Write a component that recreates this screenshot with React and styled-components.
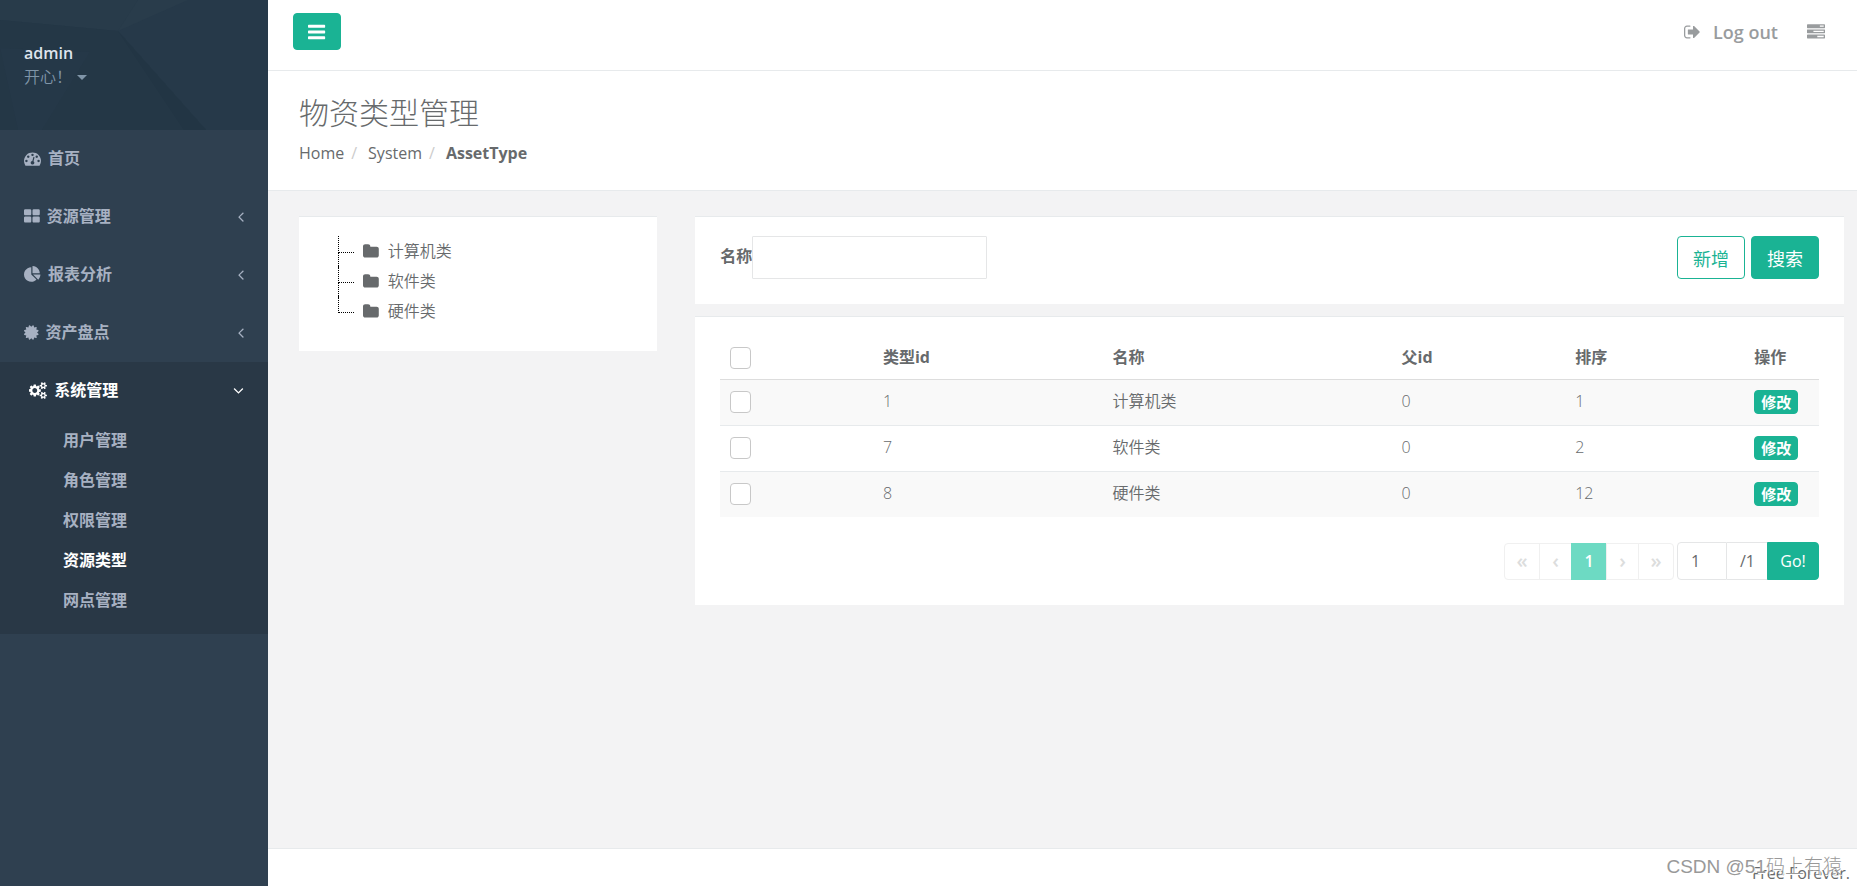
import React, {useState} from 'react'
import styled, {createGlobalStyle, css} from 'styled-components'

const sans = `"Open Sans", "Noto Sans CJK SC", sans-serif`;
const green = '#1ab394';

const GlobalStyle = createGlobalStyle`
    * {
        box-sizing: border-box;
    }

    body {
        margin: 0;
        background-color: #2f4050;
        color: #676a6c;
        font-family: ${sans};
        font-size: 16px;
        line-height: 24px;
    }

    button, input {
        font-family: inherit;
    }

    ul, ol {
        margin: 0;
        padding: 0;
        list-style: none;
    }

    a {
        color: inherit;
        text-decoration: none;
    }
`;

const gear = 'v140q0 16-149 31-12 27-30 52 51 113 51 138 0 4-4 7-122 71-124 71-8 0-46-47t-52-68q-20 2-30 2t-30-2q-14 21-52 68t-46 47q-2 0-124-71-4-3-4-7 0-25 51-138-18-25-30-52-149-15-149-31v-140q0-16 149-31 13-29 30-52-51-113-51-138 0-4 4-7 4-2 35-20t59-34 30-16q8 0 46 46.500t52 67.500q20-2 30-2t30 2q51-71 92-112l6-2q4 0 124 70 4 3 4 7 0 25-51 138 17 23 30 52 149 15 149 31z';
const bar = 'v128q0 26-19 45t-45 19h-1408q-26 0-45-19t-19-45v-128q0-26 19-45t45-19h1408q26 0 45 19t19 45z';
const task = 'v256q0 26-19 45t-45 19h-1664q-26 0-45-19t-19-45v-256q0-26 19-45t45-19h1664q26 0 45 19t19 45z';
const tile = 'v384q0 52-38 90t-90 38h-512q-52 0-90-38t-38-90v-384q0-52 38-90t90-38h512q52 0 90 38t38 90z';
const dot = 'q0-53-37.5-90.5t-90.5-37.5-90.5 37.5-37.5 90.5 37.5 90.5 90.5 37.5 90.5-37.5 37.5-90.5z';

// [x, width, path] of each glyph, on a 1792 high em
const icons = {
    bars: [128, 1536, `M1664 1344${bar}M1664 832${bar}M1664 320${bar}`],
    dashboard: [0, 1792, `M384 1152${dot}M576 704${dot}M1004 1185l101-382q6-26-7.5-48.5t-38.5-29.5-48 6.5-30 39.5l-101 382q-60 5-107 43.5t-63 98.5q-20 77 20 146t117 89 146-20 89-117q16-60-6-117t-72-91zM1664 1152${dot}M1024 512${dot}M1472 704${dot}M1792 1152q0 261-141 483-19 29-54 29h-1402q-35 0-54-29-141-221-141-483 0-182 71-348t191-286 286-191 348-71 348 71 286 191 191 286 71 348z`],
    thLarge: [64, 1664, `M832 1024${tile}M832 256${tile}M1728 1024${tile}M1728 256${tile}`],
    pie: [0, 1792, 'M768 890l546 546q-106 108-247.5 168t-298.5 60q-209 0-385.5-103t-279.5-279.5-103-385.5 103-385.5 279.500-279.500 385.500-103v762zm187 6h773q0 157-60 298.5t-168 247.5zm709-128h-768v-768q209 0 385.500 103t279.500 279.500 103 385.500z'],
    certificate: [128, 1536, 'M1504 896l138 135q30 28 20 70-12 41-52 51l-188 48 53 186q12 41-19 70-29 31-70 19l-186-53-48 188q-10 40-51 52-12 2-19 2-31 0-51-22l-135-138-135 138q-28 30-70 20-41-11-51-52l-48-188-186 53q-41 12-70-19-31-29-19-70l53-186-188-48q-40-10-52-51-10-42 20-70l138-135-138-135q-30-28-20-70 12-41 52-51l188-48-53-186q-12-41 19-70 29-31 70-19l186 53 48-188q10-41 51-51 41-12 70 19l135 139 135-139q29-30 70-19 41 10 51 51l48 188 186-53q41-12 70 19 31 29 19 70l-53 186 188 48q40 10 52 51 10 42-20 70z'],
    cogs: [-32, 1920, `M832 896q0-106-75-181t-181-75-181 75-75 181 75 181 181 75 181-75 75-181zM1600 1408q0-52-38-90t-90-38-90 38-38 90q0 53 37.5 90.5t90.5 37.5 90.5-37.5 37.5-90.5zM1600 384q0-52-38-90t-90-38-90 38-38 90q0 53 37.5 90.5t90.5 37.5 90.5-37.5 37.5-90.5zM1216 805v185q0 10-7 19.5t-16 10.5l-155 24q-11 35-32 76 34 48 90 115 7 11 7 20 0 12-7 19-23 30-82.5 89.5t-78.5 59.5q-11 0-21-7l-115-90q-37 19-77 31-11 108-23 155-7 24-30 24h-186q-11 0-20-7.5t-10-17.5l-23-153q-34-10-75-31l-118 89q-7 7-20 7-11 0-21-8-144-133-144-160 0-9 7-19 10-14 41-53t47-61q-23-44-35-82l-152-24q-10-1-17-9.5t-7-19.5v-185q0-10 7-19.5t16-10.5l155-24q11-35 32-76-34-48-90-115-7-11-7-20 0-12 7-20 22-30 82-89t79-59q11 0 21 7l115 90q34-18 77-32 11-108 23-154 7-24 30-24h186q11 0 20 7.5t10 17.5l23 153q34 10 75 31l118-89q8-7 20-7 11 0 21 8 144 133 144 160 0 8-7 19-12 16-42 54t-45 60q23 48 34 82l152 23q10 2 17 10.5t7 19.5zM1856 1338${gear}M1856 314${gear}`],
    folder: [64, 1664, 'M1728 608v704q0 92-66 158t-158 66h-1216q-92 0-158-66t-66-158v-960q0-92 66-158t158-66h320q92 0 158 66t66 158v32h672q92 0 158 66t66 158z'],
    signOut: [64, 1664, 'M704 1440q0 4 1 20t.5 26.5-3 23.5-10 19.5-20.5 6.5h-320q-119 0-203.5-84.5t-84.5-203.5v-704q0-119 84.5-203.5t203.500-84.500h320q13 0 22.500 9.500t9.500 22.500q0 4 1 20t.5 26.500-3 23.500-10 19.500-20.500 6.500h-320q-66 0-113 47t-47 113v704q0 66 47 113t113 47h312l11.500 1 11.500 3 8 5.500 7 9 2 13.500zm928-544q0 26-19 45l-544 544q-19 19-45 19t-45-19-19-45v-288h-448q-26 0-45-19t-19-45v-384q0-26 19-45t45-19h448v-288q0-26 19-45t45-19 45 19l544 544q19 19 19 45z'],
    tasks: [0, 1792, `M1024 1408h640v-128h-640v128zM640 896h1024v-128h-1024v128zM1280 384h384v-128h-384v128zM1792 1216${task}M1792 704${task}M1792 192${task}`],
    angleLeft: [600, 640, 'M1203 544q0 13-10 23l-393 393 393 393q10 10 10 23t-10 23l-50 50q-10 10-23 10t-23-10l-466-466q-10-10-10-23t10-23l466-466q10-10 23-10t23 10l50 50q10 10 10 23z'],
    angleDown: [320, 1120, 'M1395 736q0 13-10 23l-466 466q-10 10-23 10t-23-10l-466-466q-10-10-10-23t10-23l50-50q10-10 23-10t23 10l393 393 393-393q10-10 23-10t23 10l50 50q10 10 10 23z'],
};

const Svg = styled.svg`
    display: block;
    flex: none;
    height: ${({$size}) => $size}px;
    fill: currentColor;
    fill-rule: evenodd;
`;

const Icon = ({name, size = 17}) => {
    const [x, width, path] = icons[name];
    return (
        <Svg $size={size} viewBox={`${x} 0 ${width} 1792`} aria-hidden="true">
            <path d={path}/>
        </Svg>
    )
}

const Layout = styled.div`
    display: flex;
    min-height: 100vh;
    position: relative;
`;

const Sidebar = styled.nav`
    flex: none;
    width: 268px;
    background-color: #2f4050;
    color: #a7b1c2;
    font-weight: 600;
`;

const Profile = styled.div`
    position: relative;
    height: 130px;
    padding: 41px 24px 0;
    background-color: #263949;
`;

const Pattern = styled.svg`
    position: absolute;
    inset: 0;
    width: 100%;
    height: 100%;
`;

const ProfileLink = styled.a`
    position: relative;
    display: block;
    color: #dfe4ed;
`;

const Mood = styled.span`
    display: flex;
    align-items: center;
    gap: 5px;
    color: #8095a8;
    font-weight: 350;
`;

const Caret = styled.span`
    border: 5px solid transparent;
    border-top-color: currentColor;
    border-bottom: 0;
`;

const MenuLink = styled.a`
    display: flex;
    align-items: center;
    gap: 7px;
    height: 58px;
    padding: 0 24px 2px;
`;

const Arrow = styled.span`
    margin-left: auto;
`;

const MenuItem = styled.li`
    ${({$active}) => $active && css`
        background-color: #293846;

        > ${MenuLink} {
            padding-left: 29px;
            color: #fff;
        }
    `}
`;

const SubMenu = styled.ul`
    padding: 0 0 14px;
`;

const SubLink = styled.a`
    display: block;
    padding: 8px 24px 8px 63px;
    color: ${({$active}) => $active ? '#fff' : 'inherit'};
`;

const Page = styled.div`
    flex: 1;
    min-width: 0;
    display: flex;
    flex-direction: column;
    background-color: #f3f3f4;
`;

const TopBar = styled.header`
    display: flex;
    justify-content: space-between;
    align-items: flex-start;
    height: 71px;
    padding: 13px 32px 0 25px;
    background-color: #fff;
    border-bottom: 1px solid #e7eaec;
`;

const TopLinks = styled.div`
    display: flex;
    align-items: center;
    gap: 29px;
    height: 38px;
    color: #999c9e;
    font-size: 18px;
    font-weight: 600;
`;

const TopLink = styled.a`
    display: flex;
    align-items: center;
    gap: 12px;
`;

const Button = styled.button`
    display: flex;
    align-items: center;
    justify-content: center;
    height: 43px;
    padding: 0 15px;
    border: 1px solid ${green};
    border-radius: 4px;
    background-color: ${({$outline}) => $outline ? '#fff' : green};
    color: ${({$outline}) => $outline ? green : '#fff'};
    font-size: 18px;
    cursor: pointer;
`;

const MenuButton = styled(Button)`
    width: 48px;
    height: 37px;
`;

const SmallButton = styled(Button)`
    height: 24px;
    margin-top: 1px;
    padding: 0 6px;
    font-size: 15px;
    font-weight: 600;
`;

const Heading = styled.div`
    height: 120px;
    padding: 22px 31px 0;
    background-color: #fff;
    border-bottom: 1px solid #e7eaec;
`;

const Title = styled.h2`
    margin: 0 0 8px;
    font-size: 30px;
    font-weight: 300;
    line-height: 40px;
`;

const Breadcrumb = styled.ol`
    display: flex;

    li + li::before {
        content: "/";
        padding: 0 11px 0 7px;
        color: #ccc;
        font-weight: 400;
    }

    li:last-child {
        font-weight: 700;
    }
`;

const Content = styled.main`
    flex: 1;
    display: flex;
    align-items: flex-start;
    gap: 38px;
    padding: 25px 13px 25px 31px;
`;

const Side = styled.div`
    flex: none;
    width: calc(25% - 28px);
`;

const Main = styled.div`
    flex: 1;
    display: flex;
    flex-direction: column;
    gap: 12px;
`;

const Panel = styled.section`
    padding: 19px 25px 25px;
    background-color: #fff;
    border-top: 1px solid #e7eaec;
`;

const Tree = styled.ul`
    padding: 0 0 0 14px;
`;

const TreeItem = styled.li`
    display: flex;
    align-items: center;
    gap: 9px;
    height: 30px;
    font-weight: 350;
`;

const Branch = styled.span`
    width: 16px;
    height: 30px;

    &::before, &::after {
        content: "";
        display: block;
        height: 15px;
        border-left: 1px dotted #000;
    }

    &::before {
        height: 16px;
        border-bottom: 1px dotted #000;
    }

    ${TreeItem}:last-child &::after {
        border: 0;
    }
`;

const SearchForm = styled.form`
    display: flex;
    align-items: flex-start;
`;

const FieldLabel = styled.label`
    padding-top: 8px;
    font-weight: 700;
`;

const TextInput = styled.input`
    width: 235px;
    height: 43px;
    padding: 0 15px;
    border: 1px solid #e5e6e7;
    border-radius: 1px;
    background-color: #fff;
    color: inherit;
    font-size: 16px;
`;

const Actions = styled.div`
    display: flex;
    gap: 6px;
    margin-left: auto;
`;

const Table = styled.table`
    width: 100%;
    margin-bottom: 25px;
    border-collapse: collapse;
    table-layout: fixed;

    th, td {
        padding: 9px 10px;
        text-align: left;
        vertical-align: top;
    }

    th {
        height: 43px;
        border-bottom: 1px solid #ddd;
        font-weight: 700;
    }

    td {
        height: 46px;
        font-weight: 350;
        border-top: 1px solid #e7eaec;
    }

    tbody tr:nth-child(odd) {
        background-color: #f9f9f9;
    }
`;

const Check = styled.input`
    appearance: none;
    display: block;
    width: 21px;
    height: 22px;
    margin: 2px 0 0;
    border: 1px solid #c8c8c8;
    border-radius: 4px;
    background-color: #fff;

    &:checked {
        background-color: ${green};
    }
`;

const PagerRow = styled.div`
    display: flex;
    justify-content: flex-end;
    align-items: center;
    gap: 3px;
    height: 38px;
`;

const Pager = styled.div`
    display: flex;
`;

const PageButton = styled.button`
    width: ${({$wide}) => $wide ? 36 : 33}px;
    height: 37px;
    margin-left: -1px;
    padding: 0;
    border: 1px solid ${({$active}) => $active ? '#6ddac3' : '#f0f0f0'};
    background-color: ${({$active}) => $active ? '#6ddac3' : '#fff'};
    color: ${({$active}) => $active ? '#fff' : '#dcdddd'};
    font-size: ${({$active}) => $active ? 16 : 20}px;
    font-weight: 600;
    line-height: 24px;

    &:first-child {
        border-radius: 4px 0 0 4px;
    }

    &:last-child {
        border-radius: 0 4px 4px 0;
    }
`;

const Jump = styled.form`
    display: flex;
`;

const JumpInput = styled(TextInput)`
    width: 50px;
    height: 38px;
    padding: 0 13px;
    border-radius: 4px 0 0 4px;
`;

const Total = styled.span`
    width: 40px;
    padding: 6px 0 0 13px;
    border: 1px solid #e5e6e7;
    border-width: 1px 0;
`;

const GoButton = styled(Button)`
    width: 52px;
    height: 38px;
    padding: 0;
    border-radius: 0 4px 4px 0;
    font-size: 16px;
`;

const Footer = styled.footer`
    height: 38px;
    padding: 12px 7px 0 0;
    overflow: hidden;
    background-color: #fff;
    border-top: 1px solid #e7eaec;
    text-align: right;
`;

const Watermark = styled.span`
    position: absolute;
    right: 15px;
    bottom: 4px;
    color: #999;
    font-family: "Liberation Sans", "Noto Sans CJK SC", sans-serif;
    font-size: 19px;
    font-weight: 300;
    line-height: 30px;
    text-shadow: 1px 1px 0 #fff;
`;

const menu = [
    {icon: 'dashboard', name: '首页'},
    {icon: 'thLarge', name: '资源管理', arrow: 'angleLeft'},
    {icon: 'pie', name: '报表分析', arrow: 'angleLeft'},
    {icon: 'certificate', name: '资产盘点', arrow: 'angleLeft'},
    {icon: 'cogs', name: '系统管理', arrow: 'angleDown', children: ['用户管理', '角色管理', '权限管理', '资源类型', '网点管理']},
];

const types = [
    {id: 1, name: '计算机类', parent: 0, sort: 1},
    {id: 7, name: '软件类', parent: 0, sort: 2},
    {id: 8, name: '硬件类', parent: 0, sort: 12},
];

const columns = [
    ['类型id', '20.9%'],
    ['名称', '26.3%'],
    ['父id', '15.8%'],
    ['排序', '16.3%'],
    ['操作', '6.8%'],
];

const App = () => {

    const [name, setName] = useState("");
    const [page, setPage] = useState("1");

    const onSubmit = (e) => {
        e.preventDefault()
    }

    return (
        <Layout>
            <GlobalStyle/>
            <Sidebar>
                <Profile>
                    <Pattern viewBox="0 0 268 130" preserveAspectRatio="none" aria-hidden="true">
                        <path fill="#293c4b" d="M138 0h50L118 31z"/>
                        <path fill="#283b4a" d="M0 0h138l-20 31L0 20z"/>
                        <path fill="#243746" d="M0 20l118 11 88 99H0z"/>
                        <path fill="#223544" d="M118 31l88 99h-22z"/>
                        <path fill="#253848" d="M0 48l90 4-48 78H18z"/>
                    </Pattern>
                    <ProfileLink href="#">
                        admin
                        <Mood>开心！<Caret/></Mood>
                    </ProfileLink>
                </Profile>
                <ul>
                    {menu.map((item) => (
                        <MenuItem key={item.name} $active={!!item.children}>
                            <MenuLink href="#">
                                <Icon name={item.icon}/>
                                {item.name}
                                {item.arrow && <Arrow><Icon name={item.arrow}/></Arrow>}
                            </MenuLink>
                            {item.children &&
                                <SubMenu>
                                    {item.children.map((child) => (
                                        <li key={child}>
                                            <SubLink href="#" $active={child === '资源类型'}>{child}</SubLink>
                                        </li>
                                    ))}
                                </SubMenu>
                            }
                        </MenuItem>
                    ))}
                </ul>
            </Sidebar>

            <Page>
                <TopBar>
                    <MenuButton type="button" aria-label="menu"><Icon name="bars" size={20}/></MenuButton>
                    <TopLinks>
                        <TopLink href="#"><Icon name="signOut" size={18}/>Log out</TopLink>
                        <TopLink href="#" aria-label="tasks"><Icon name="tasks" size={18}/></TopLink>
                    </TopLinks>
                </TopBar>

                <Heading>
                    <Title>物资类型管理</Title>
                    <Breadcrumb>
                        <li><a href="#">Home</a></li>
                        <li><a href="#">System</a></li>
                        <li>AssetType</li>
                    </Breadcrumb>
                </Heading>

                <Content>
                    <Side>
                        <Panel>
                            <Tree>
                                {types.map((type) => (
                                    <TreeItem key={type.id}>
                                        <Branch/>
                                        <Icon name="folder"/>
                                        {type.name}
                                    </TreeItem>
                                ))}
                            </Tree>
                        </Panel>
                    </Side>

                    <Main>
                        <Panel>
                            <SearchForm onSubmit={onSubmit}>
                                <FieldLabel htmlFor="name">名称</FieldLabel>
                                <TextInput id="name" value={name} onChange={(e) => setName(e.target.value)}/>
                                <Actions>
                                    <Button type="button" $outline>新增</Button>
                                    <Button type="submit">搜索</Button>
                                </Actions>
                            </SearchForm>
                        </Panel>

                        <Panel>
                            <Table>
                                <colgroup>
                                    <col style={{width: '13.9%'}}/>
                                    {columns.map(([title, width]) => <col key={title} style={{width}}/>)}
                                </colgroup>
                                <thead>
                                <tr>
                                    <th><Check type="checkbox" aria-label="全选"/></th>
                                    {columns.map(([title]) => <th key={title}>{title}</th>)}
                                </tr>
                                </thead>
                                <tbody>
                                {types.map((type) => (
                                    <tr key={type.id}>
                                        <td><Check type="checkbox" aria-label={type.name}/></td>
                                        <td>{type.id}</td>
                                        <td>{type.name}</td>
                                        <td>{type.parent}</td>
                                        <td>{type.sort}</td>
                                        <td><SmallButton type="button">修改</SmallButton></td>
                                    </tr>
                                ))}
                                </tbody>
                            </Table>
                            <PagerRow>
                                <Pager>
                                    <PageButton type="button" $wide>«</PageButton>
                                    <PageButton type="button">‹</PageButton>
                                    <PageButton type="button" $wide $active>1</PageButton>
                                    <PageButton type="button">›</PageButton>
                                    <PageButton type="button" $wide>»</PageButton>
                                </Pager>
                                <Jump onSubmit={onSubmit}>
                                    <JumpInput aria-label="page" value={page} onChange={(e) => setPage(e.target.value)}/>
                                    <Total>/1</Total>
                                    <GoButton type="submit">Go!</GoButton>
                                </Jump>
                            </PagerRow>
                        </Panel>
                    </Main>
                </Content>

                <Footer>Free Forever.</Footer>
            </Page>
            <Watermark>CSDN @51码上有猿</Watermark>
        </Layout>
    );
}

export default App;
